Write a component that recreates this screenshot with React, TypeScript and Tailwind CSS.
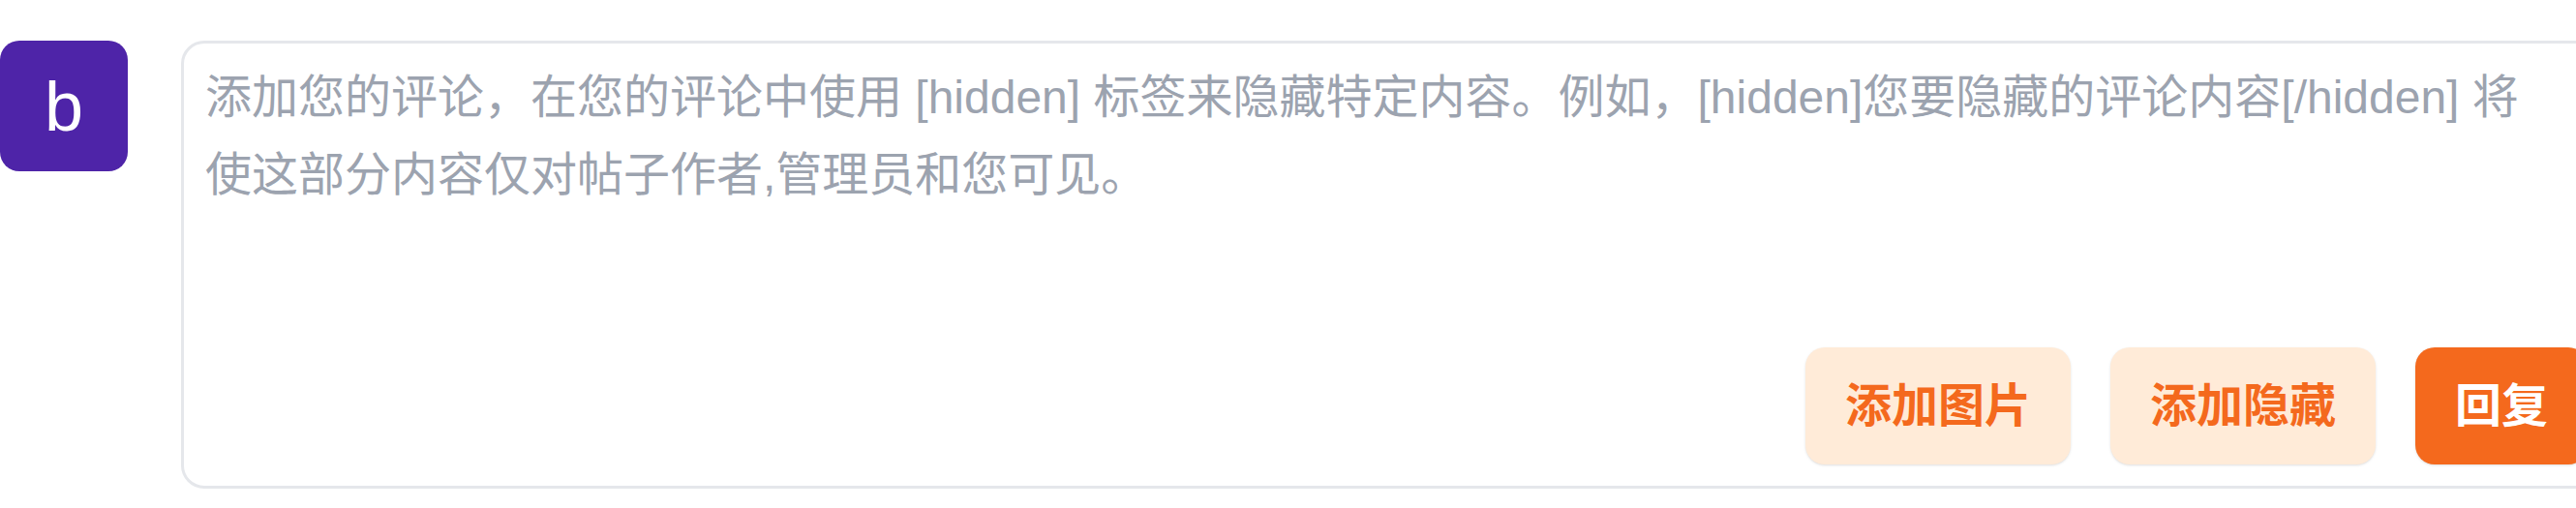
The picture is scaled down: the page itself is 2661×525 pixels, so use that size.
const App = () => {
  return (
    <div className="w-full h-[525px] overflow-hidden bg-white font-['Liberation_Sans','Noto_Sans_CJK_SC',sans-serif]">
      <div className="flex items-start w-[2700px] pt-[42px]">
        {/* 头像 */}
        <div className="flex items-center justify-center shrink-0 w-[132px] h-[135px] rounded-[20px] bg-[#4e24a8] text-white text-[72px] leading-none">
          b
        </div>

        {/* 评论输入框 */}
        <div className="ml-[55px] flex-1 flex flex-col border-[3px] border-[#e5e7eb] rounded-[24px] pt-[16px] pl-[22px] pr-[24px] pb-[22px]">
          <textarea
            className="block w-[2412px] h-[298px] resize-none outline-none overflow-hidden bg-transparent text-[48px] leading-[80px] text-[#9ca3af] placeholder:text-[#9ca3af]"
            placeholder="添加您的评论，在您的评论中使用 [hidden] 标签来隐藏特定内容。例如，[hidden]您要隐藏的评论内容[/hidden] 将使这部分内容仅对帖子作者,管理员和您可见。"
          />
          <div className="flex justify-end gap-[41px]">
            <button className="h-[121px] px-[41px] rounded-[20px] bg-[#ffebd8] text-[#f4691d] text-[48px] font-bold shadow-sm">
              添加图片
            </button>
            <button className="h-[121px] px-[41px] rounded-[20px] bg-[#ffebd8] text-[#f4691d] text-[48px] font-bold shadow-sm">
              添加隐藏
            </button>
            <button className="h-[121px] px-[41px] rounded-[20px] bg-[#f4691d] text-white text-[48px] font-bold shadow-sm">
              回复
            </button>
          </div>
        </div>
      </div>
    </div>
  );
};

export default App;
